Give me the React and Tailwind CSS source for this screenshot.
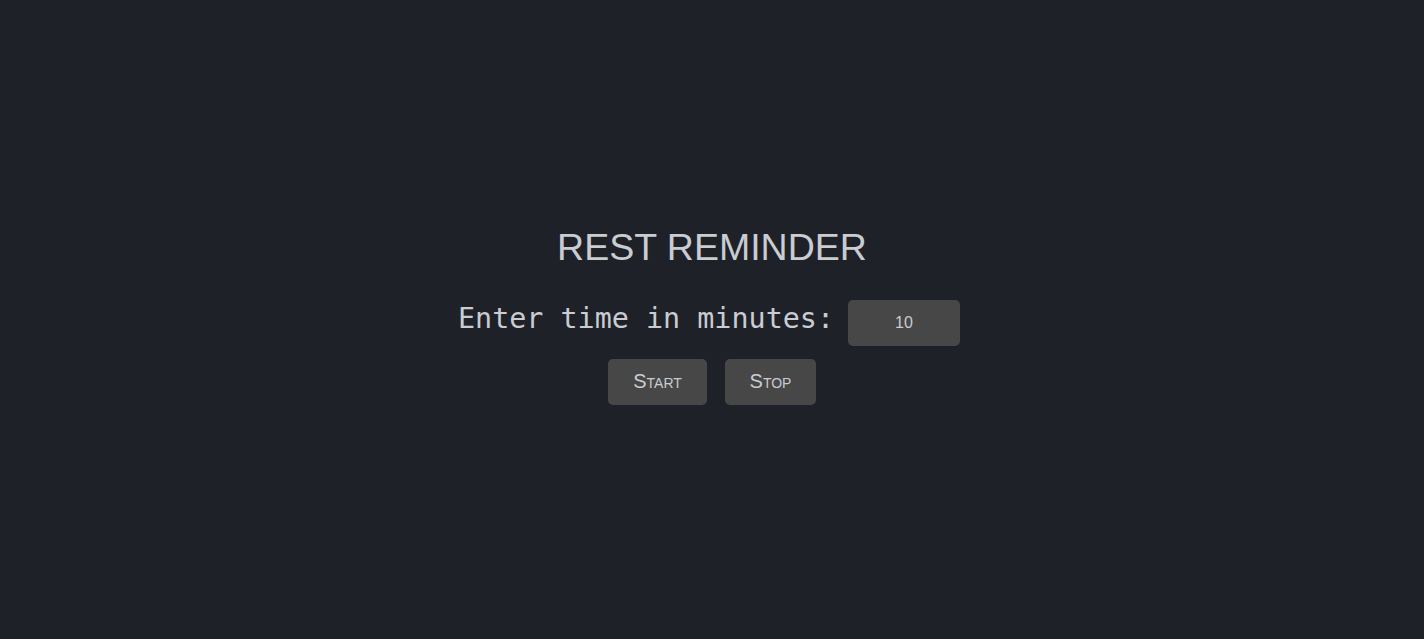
export default function App() {
  return (
    <div className="h-screen w-full bg-[#1f2129] flex flex-col items-center justify-center text-[#c9ccd1]">
      <h1 className="text-[37.5px] leading-none font-['Liberation_Sans',Arial,sans-serif] mb-[33.5px] mt-[-5px]">
        REST REMINDER
      </h1>
      <div className="flex items-center gap-[14px] pr-[6px]">
        <label className="text-[28.4px] leading-none font-['DejaVu_Sans_Mono',monospace] mb-[7px]">
          Enter time in minutes:
        </label>
        <input
          defaultValue="10"
          className="w-[112px] h-[46px] rounded-[5px] bg-[#474747] text-center text-[16px] text-[#c9ccd1] font-['Liberation_Sans',Arial,sans-serif] outline-none"
        />
      </div>
      <div className="flex gap-[18px] mt-[13px] font-['Liberation_Sans',Arial,sans-serif]">
        <button className="w-[99px] h-[46px] pb-[3px] rounded-[5px] bg-[#474747] text-[20px] leading-none [font-variant:small-caps] text-[#c9ccd1]">
          Start
        </button>
        <button className="w-[91px] h-[46px] pb-[3px] rounded-[5px] bg-[#474747] text-[20px] leading-none [font-variant:small-caps] text-[#c9ccd1]">
          Stop
        </button>
      </div>
    </div>
  );
}
